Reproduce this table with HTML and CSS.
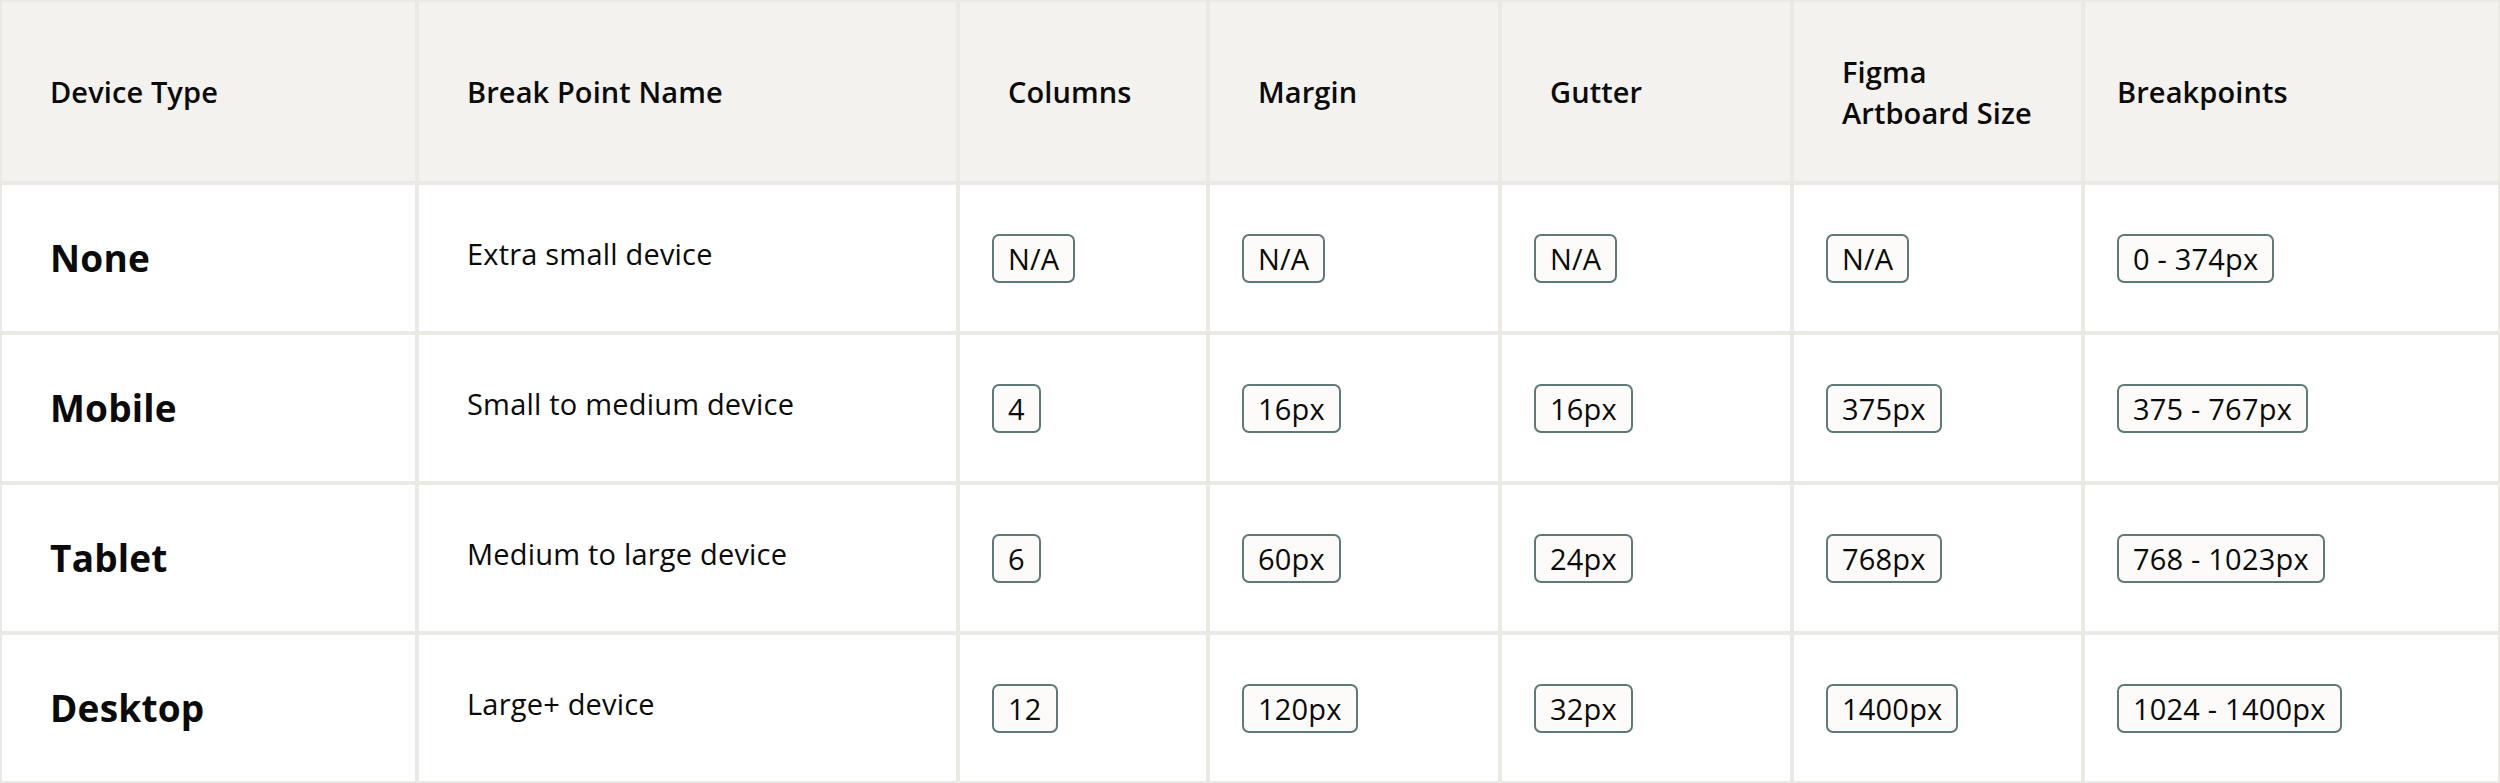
FILE: index.html
```html
<!DOCTYPE html>
<html lang="en">
<head>
<meta charset="utf-8">
<title>Breakpoints</title>
<link rel="stylesheet" href="styles.css">
</head>
<body>
<table class="grid-table">
  <colgroup>
    <col class="c-device">
    <col class="c-name">
    <col class="c-cols">
    <col class="c-margin">
    <col class="c-gutter">
    <col class="c-size">
    <col class="c-bp">
  </colgroup>
  <thead>
    <tr class="head-row">
      <th>Device Type</th>
      <th>Break Point Name</th>
      <th>Columns</th>
      <th>Margin</th>
      <th>Gutter</th>
      <th>Figma Artboard Size</th>
      <th class="last">Breakpoints</th>
    </tr>
  </thead>
  <tbody>
    <tr class="body-row">
      <td class="device">None</td>
      <td class="desc"><span class="desc-text">Extra small device</span></td>
      <td class="val"><span class="tag">N/A</span></td>
      <td class="val"><span class="tag">N/A</span></td>
      <td class="val"><span class="tag">N/A</span></td>
      <td class="val"><span class="tag">N/A</span></td>
      <td class="val"><span class="tag">0 - 374px</span></td>
    </tr>
    <tr class="body-row">
      <td class="device">Mobile</td>
      <td class="desc"><span class="desc-text">Small to medium device</span></td>
      <td class="val"><span class="tag">4</span></td>
      <td class="val"><span class="tag">16px</span></td>
      <td class="val"><span class="tag">16px</span></td>
      <td class="val"><span class="tag">375px</span></td>
      <td class="val"><span class="tag">375 - 767px</span></td>
    </tr>
    <tr class="body-row">
      <td class="device">Tablet</td>
      <td class="desc"><span class="desc-text">Medium to large device</span></td>
      <td class="val"><span class="tag">6</span></td>
      <td class="val"><span class="tag">60px</span></td>
      <td class="val"><span class="tag">24px</span></td>
      <td class="val"><span class="tag">768px</span></td>
      <td class="val"><span class="tag">768 - 1023px</span></td>
    </tr>
    <tr class="body-row">
      <td class="device">Desktop</td>
      <td class="desc"><span class="desc-text">Large+ device</span></td>
      <td class="val"><span class="tag">12</span></td>
      <td class="val"><span class="tag">120px</span></td>
      <td class="val"><span class="tag">32px</span></td>
      <td class="val"><span class="tag">1400px</span></td>
      <td class="val"><span class="tag">1024 - 1400px</span></td>
    </tr>
  </tbody>
</table>
</body>
</html>
```
FILE: styles.css
```css
html, body {
  margin: 0;
  padding: 0;
  background: #ffffff;
}

body {
  font-family: "Open Sans", "Noto Sans", sans-serif;
  color: #0b0b0b;
}

.grid-table {
  width: 2500px;
  table-layout: fixed;
  border-collapse: separate;
  border-spacing: 0;
}

.c-device { width: 417px; }
.c-name { width: 541px; }
.c-cols { width: 250px; }
.c-margin { width: 292px; }
.c-gutter { width: 292px; }
.c-size { width: 291px; }
.c-bp { width: 417px; }

.grid-table th,
.grid-table td {
  border: 2px solid #ebe9e3;
  vertical-align: middle;
  text-align: left;
  box-sizing: border-box;
}

.head-row {
  height: 183px;
}

.head-row th {
  background: #f3f2ee;
  font-size: 29px;
  font-weight: 600;
  letter-spacing: 0.1px;
  line-height: 41px;
  padding: 0 48px;
}

.head-row th.last {
  padding-left: 32px;
}

.body-row {
  height: 150px;
}

.device {
  padding: 0 48px;
  font-size: 37px;
  font-weight: 700;
  letter-spacing: 0.2px;
  line-height: 48px;
}

.desc {
  padding: 0 48px;
  font-size: 29px;
  font-weight: 400;
  letter-spacing: 0.2px;
  line-height: 41px;
}

.desc-text {
  display: block;
  padding-bottom: 10px;
}

.val {
  padding: 0 32px;
  font-size: 29px;
  letter-spacing: 0.2px;
  line-height: 45px;
}

.tag {
  display: inline-block;
  padding: 0 14px;
  border: 2px solid #5f7878;
  border-radius: 7px;
  background: #fcfbf9;
  line-height: 45px;
}
```
